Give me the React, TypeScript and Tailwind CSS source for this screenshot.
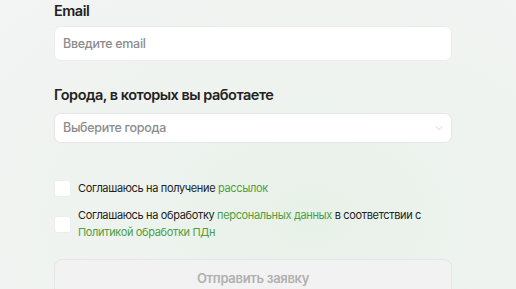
import { ChevronDown } from 'lucide-react';

const font = { fontFamily: 'Inter, "Noto Sans", sans-serif' };

export default function App() {
  return (
    <div
      className="h-[289px] w-[516px] overflow-hidden bg-[radial-gradient(ellipse_at_60%_75%,#e8f1e8_0%,#eef3ef_45%,#f3f4f4_100%)]"
      style={font}
    >
      <div className="ml-[54px] w-[398px]">
        {/* Email */}
        <label className="block pt-[1px] text-[14.5px] leading-[20px] font-semibold tracking-[-0.5px] text-[#222]">
          Email
        </label>
        <input
          placeholder="Введите email"
          className="mt-[5px] h-[35px] w-full rounded-[7px] border border-[#ececec] bg-white px-[8px] text-[12.5px] font-medium tracking-[-0.3px] text-[#222] outline-none placeholder:text-[#8c8c8c]"
        />

        {/* Города */}
        <label className="mt-[24px] block text-[14.5px] leading-[20px] font-semibold tracking-[-0.5px] text-[#222]">
          Города, в которых вы работаете
        </label>
        <button className="mt-[8px] flex h-[30px] w-full items-center justify-between rounded-[7px] border border-[#e6e6e6] bg-white pr-[6px] pl-[8px]">
          <span className="text-[12.5px] font-medium tracking-[-0.3px] text-[#8c8c8c]">Выберите города</span>
          <ChevronDown className="h-[12px] w-[12px] text-[#c4c4c4]" strokeWidth={1.5} />
        </button>

        {/* Согласия */}
        <div className="mt-[37px] flex items-center gap-[7px]">
          <span className="h-[17px] w-[17px] shrink-0 rounded-[3px] border border-[#ededed] bg-white" />
          <span className="text-[11px] leading-[17px] tracking-[-0.35px] text-[#222]">
            Соглашаюсь на получение <a className="text-[#4f9e45]">рассылок</a>
          </span>
        </div>
        <div className="mt-[10px] flex items-center gap-[7px]">
          <span className="h-[17px] w-[17px] shrink-0 rounded-[3px] border border-[#ededed] bg-white" />
          <span className="text-[11px] leading-[17px] tracking-[-0.35px] text-[#222]">
            Соглашаюсь на обработку <a className="text-[#4f9e45]">персональных данных</a> в соответствии с
            <br />
            <a className="text-[#4f9e45]">Политикой обработки ПДн</a>
          </span>
        </div>

        <button
          disabled
          className="mt-[18px] flex h-[40px] w-full items-center justify-center rounded-[8px] border border-[#e6e6e6] bg-[#f2f2f2] text-[13px] font-semibold tracking-[-0.3px] text-[#b0b0b0]"
        >
          Отправить заявку
        </button>
      </div>
    </div>
  );
}
